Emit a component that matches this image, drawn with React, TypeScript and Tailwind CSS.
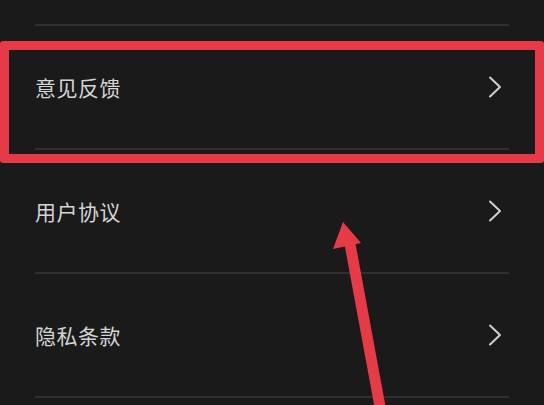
import React from "react";

const items = ["意见反馈", "用户协议", "隐私条款"];

function Chevron() {
  return (
    <svg width="14" height="22" viewBox="0 0 14 22" fill="none">
      <polyline points="2,1.5 12,11 2,20.5" stroke="#cfcfcf" strokeWidth="2" strokeLinecap="round" strokeLinejoin="round" />
    </svg>
  );
}

export default function App() {
  return (
    <div
      className="relative w-[544px] h-[405px] overflow-hidden bg-[#1a1a1a]"
      style={{ fontFamily: '"Noto Sans CJK SC", "Noto Sans", sans-serif' }}
    >
      <div className="h-[24px]" />
      <div className="mx-[35px] h-[2px] bg-[#2f2f2f]" />
      {items.map((t) => (
        <div key={t}>
          <div className="h-[122px] flex items-center justify-between pl-[35px] pr-[42px]">
            <span className="text-[21px] leading-none text-[#d4d4d4] tracking-[0.5px]">{t}</span>
            <Chevron />
          </div>
          <div className="mx-[35px] h-[2px] bg-[#2f2f2f]" />
        </div>
      ))}

      <div className="absolute left-0 right-0 top-[41px] h-[122px] border-[9px] border-[#e63a47] rounded-[3px]" />

      <svg className="absolute left-0 top-0" width="544" height="405" viewBox="0 0 544 405">
        <line x1="350" y1="244" x2="381" y2="412" stroke="#e63a47" strokeWidth="11" />
        <polygon points="343,222 333,249 361,243" fill="#e63a47" />
      </svg>
    </div>
  );
}
